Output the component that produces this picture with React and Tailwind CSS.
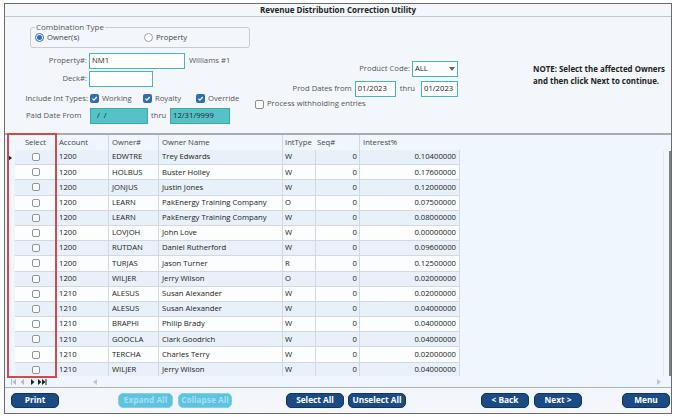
import React from "react";

const rows = [
  ["1200", "EDWTRE", "Trey Edwards", "W", "0", "0.10400000"],
  ["1200", "HOLBUS", "Buster Holley", "W", "0", "0.17600000"],
  ["1200", "JONJUS", "Justin Jones", "W", "0", "0.12000000"],
  ["1200", "LEARN", "PakEnergy Training Company", "O", "0", "0.07500000"],
  ["1200", "LEARN", "PakEnergy Training Company", "W", "0", "0.08000000"],
  ["1200", "LOVJOH", "John Love", "W", "0", "0.00000000"],
  ["1200", "RUTDAN", "Daniel Rutherford", "W", "0", "0.09600000"],
  ["1200", "TURJAS", "Jason Turner", "R", "0", "0.12500000"],
  ["1200", "WILJER", "Jerry Wilson", "O", "0", "0.02000000"],
  ["1210", "ALESUS", "Susan Alexander", "W", "0", "0.02000000"],
  ["1210", "ALESUS", "Susan Alexander", "W", "0", "0.04000000"],
  ["1210", "BRAPHI", "Philip Brady", "W", "0", "0.04000000"],
  ["1210", "GOOCLA", "Clark Goodrich", "W", "0", "0.04000000"],
  ["1210", "TERCHA", "Charles Terry", "W", "0", "0.02000000"],
  ["1210", "WILJER", "Jerry Wilson", "W", "0", "0.04000000"],
];

const cols = "grid grid-cols-[10px_42px_52px_50px_124px_33px_44px_100px]";

function Check({ on }) {
  return on ? (
    <span className="flex items-center justify-center w-[9px] h-[9px] rounded-[2px] bg-[#2f6db5]">
      <svg width="7" height="7" viewBox="0 0 10 10">
        <path d="M2 5.2 4.2 7.3 8.2 2.8" fill="none" stroke="#fff" strokeWidth="1.8" />
      </svg>
    </span>
  ) : (
    <span className="block w-[9px] h-[9px] rounded-[2px] border border-[#8a8f96] bg-white" />
  );
}

function Btn({ children, w, disabled }) {
  return (
    <div
      className={`flex items-center justify-center h-[15px] rounded-[5px] font-bold text-[8.3px] border ${w} ${
        disabled ? "bg-[#5cc3e0] border-[#7fd0e8] text-[#a9def0]" : "bg-[#1b4b84] border-[#0f3563] text-white"
      }`}
    >
      {children}
    </div>
  );
}

function Input({ w, value, teal, className = "" }) {
  return (
    <div
      className={`h-[16px] border px-[2px] flex items-center ${w} ${
        teal ? "bg-[#55c2c7] border-[#3fa9ad]" : "bg-white border-[#45b7b7]"
      } ${className}`}
    >
      {value}
    </div>
  );
}

export default function App() {
  return (
    <div className="w-[675px] h-[417px] bg-white pt-[3px] pl-[4px] font-['Open_Sans',sans-serif] text-[7.7px] text-[#333]">
      <div className="w-[668px] h-[411px] border border-[#6b6b6b] bg-[#f3f7fc] flex flex-col relative">
        <div className="h-[13px] border-b border-[#c4c8cc] flex items-center justify-center font-bold text-[#222] text-[8px]">
          Revenue Distribution Correction Utility
        </div>

        <div className="h-[116px] flex">
          <div className="w-[245px] flex flex-col">
            <fieldset className="mt-[5px] ml-[25px] w-[220px] h-[26px] border border-[#c9ccd0] rounded-[3px] px-[4px] pb-[2px]">
              <legend className="px-[1px] text-[8px] text-[#555] leading-[10px]">Combination Type</legend>
              <div className="flex items-center h-[11px]">
                <span className="flex items-center w-[109px] gap-[3px] text-[#444]">
                  <span className="flex items-center justify-center w-[9px] h-[9px] rounded-full border border-[#2f6db5] bg-white">
                    <span className="w-[5px] h-[5px] rounded-full bg-[#2f6db5]" />
                  </span>
                  Owner(s)
                </span>
                <span className="flex items-center gap-[3px] text-[#444]">
                  <span className="w-[9px] h-[9px] rounded-full border border-[#9aa0a6] bg-white" />
                  Property
                </span>
              </div>
            </fieldset>
            <div className="flex items-center mt-[5px] h-[16px]">
              <span className="w-[84px] pr-[2px] text-right text-[#555]">Property#:</span>
              <Input w="w-[96px]" value={<span className="text-[#222]">NM1</span>} />
              <span className="ml-[4px] text-[#555]">Williams #1</span>
            </div>
            <div className="flex items-center mt-[2px] h-[16px]">
              <span className="w-[84px] pr-[2px] text-right text-[#555]">Deck#:</span>
              <Input w="w-[64px]" value="" />
            </div>
            <div className="flex items-center mt-[6px] h-[12px] text-[#555]">
              <span className="w-[85px] pr-[2px] text-right whitespace-nowrap">Include Int Types:</span>
              <span className="flex items-center gap-[3px] w-[53px]"><Check on />Working</span>
              <span className="flex items-center gap-[3px] w-[53px]"><Check on />Royalty</span>
              <span className="flex items-center gap-[3px]"><Check on />Override</span>
            </div>
            <div className="flex items-center mt-[3px] h-[16px] text-[#555]">
              <span className="w-[85px] pl-[21px] whitespace-nowrap">Paid Date From</span>
              <Input w="w-[58px]" value={<span className="pl-[4px] text-[#222]">/ &nbsp;/</span>} teal />
              <span className="ml-[3px] w-[19px]">thru</span>
              <Input w="w-[60px]" value={<span className="text-[#222]">12/31/9999</span>} teal />
            </div>
          </div>

          <div className="w-[210px] flex flex-col pr-[2px] text-[#555]">
            <div className="flex items-center justify-end mt-[44px] h-[16px]">
              <span className="mr-[2px]">Product Code:</span>
              <div className="w-[46px] h-[16px] border border-[#45b7b7] bg-white flex items-center justify-between px-[2px] text-[#222]">
                ALL
                <svg width="6" height="4" viewBox="0 0 6 4"><path d="M0 0h6L3 4z" fill="#666" /></svg>
              </div>
            </div>
            <div className="flex items-center justify-end mt-[4px] h-[16px]">
              <span className="mr-[3px]">Prod Dates from</span>
              <Input w="w-[41px]" value={<span className="text-[#222]">01/2023</span>} />
              <span className="ml-[4px] mr-[6px]">thru</span>
              <Input w="w-[37px]" value={<span className="text-[#222]">01/2023</span>} />
            </div>
            <div className="flex items-center gap-[3px] ml-[5px] mt-[1px] h-[12px] whitespace-nowrap">
              <Check />
              Process withholding entries
            </div>
          </div>

          <div className="flex-1 pl-[73px] pt-[46px] font-bold text-[7.9px] leading-[12px] text-[#222] whitespace-nowrap">
            <div>NOTE: Select the affected Owners</div>
            <div>and then click Next to continue.</div>
          </div>
        </div>

        <div className="h-[255px] border-t-2 border-b border-t-[#a8acb0] border-b-[#b0b4b8] bg-[#f0f6fd] flex flex-col relative">
          <div className="flex flex-1 min-h-0">
            <div className="flex-1 flex flex-col min-w-0">
              <div className={`${cols} h-[15px] items-center text-[#444]`}>
                <div />
                <div className="text-center border-r border-[#d3d8de] h-full flex items-center justify-center">Select</div>
                <div className="pl-[2px] border-r border-[#d3d8de] h-full flex items-center">Account</div>
                <div className="pl-[3px] border-r border-[#d3d8de] h-full flex items-center">Owner#</div>
                <div className="pl-[3px] border-r border-[#d3d8de] h-full flex items-center">Owner Name</div>
                <div className="pl-[2px] h-full flex items-center">IntType</div>
                <div className="pl-[1px] border-r border-[#d3d8de] h-full flex items-center">Seq#</div>
                <div className="pl-[3px] h-full flex items-center">Interest%</div>
              </div>
              <div className="flex-1 overflow-hidden">
                {rows.map((r, i) => (
                  <div
                    key={i}
                    className={`${cols} h-[15.2px] items-center text-[#222] ${i % 2 === 0 ? "[&>div]:bg-[#e8f0f9]" : "[&>div]:bg-[#fbfdff]"}`}
                  >
                    <div className="h-full flex items-center justify-center !bg-[#f0f6fd]">
                      {i === 0 && <svg width="4" height="6" viewBox="0 0 4 6"><path d="M0 0l4 3-4 3z" fill="#222" /></svg>}
                    </div>
                    <div className="h-full flex items-center justify-center border-r border-b border-[#d3d8de]">
                      <span className="block w-[8px] h-[8px] rounded-[2px] border border-[#8d9399] bg-white" />
                    </div>
                    <div className="h-full flex items-center pl-[2px] border-r border-b border-[#d3d8de]">{r[0]}</div>
                    <div className="h-full flex items-center pl-[3px] border-r border-b border-[#d3d8de]">{r[1]}</div>
                    <div className="h-full flex items-center pl-[3px] border-r border-b border-[#d3d8de] whitespace-nowrap overflow-hidden">{r[2]}</div>
                    <div className="h-full flex items-center pl-[2px] border-r border-b border-[#d3d8de]">{r[3]}</div>
                    <div className="h-full flex items-center justify-end pr-[2px] border-r border-b border-[#d3d8de]">{r[4]}</div>
                    <div className="h-full flex items-center justify-end pr-[3px] border-r border-b border-[#d3d8de]">{r[5]}</div>
                  </div>
                ))}
              </div>
            </div>
            <div className="w-[8px] mt-[16px] border-l border-[#e2e6ea] flex justify-end">
              <div className="w-[2px] bg-[#7c8187]" />
            </div>
          </div>
          <div className="h-[11px] flex items-center pl-[6px] pr-[10px] relative">
            <svg width="40" height="6" viewBox="0 0 40 6">
              <path d="M0 0h1v6H0zM5 0v6L1.5 3z" fill="#b5bac0" />
              <path d="M13 0v6L9.5 3z" fill="#b5bac0" />
              <path d="M20 0l3.5 3L20 6z" fill="#222" />
              <path d="M27 0l3.5 3L27 6zM31 0l3.5 3L31 6zM34.5 0h1v6h-1z" fill="#222" />
            </svg>
            <svg className="ml-[42px]" width="4" height="6" viewBox="0 0 4 6"><path d="M4 0v6L0 3z" fill="#c2c6cb" /></svg>
            <div className="flex-1" />
            <svg width="4" height="6" viewBox="0 0 4 6"><path d="M0 0l4 3-4 3z" fill="#c2c6cb" /></svg>
          </div>
          <div className="absolute left-[2px] top-[-2px] w-[50px] h-[245px] border-2 border-[#cf4b50] pointer-events-none" />
        </div>

        <div className="flex-1 flex items-center pl-[6px]">
          <Btn w="w-[48px]">Print</Btn>
          <div className="ml-[59px]"><Btn w="w-[55px]" disabled>Expand All</Btn></div>
          <div className="ml-[5px]"><Btn w="w-[54px]" disabled>Collapse All</Btn></div>
          <div className="ml-[54px]"><Btn w="w-[58px]">Select All</Btn></div>
          <div className="ml-[4px]"><Btn w="w-[58px]">Unselect All</Btn></div>
          <div className="ml-[75px]"><Btn w="w-[48px]">&lt; Back</Btn></div>
          <div className="ml-[5px]"><Btn w="w-[48px]">Next &gt;</Btn></div>
          <div className="ml-[40px]"><Btn w="w-[48px]">Menu</Btn></div>
        </div>
      </div>
    </div>
  );
}
